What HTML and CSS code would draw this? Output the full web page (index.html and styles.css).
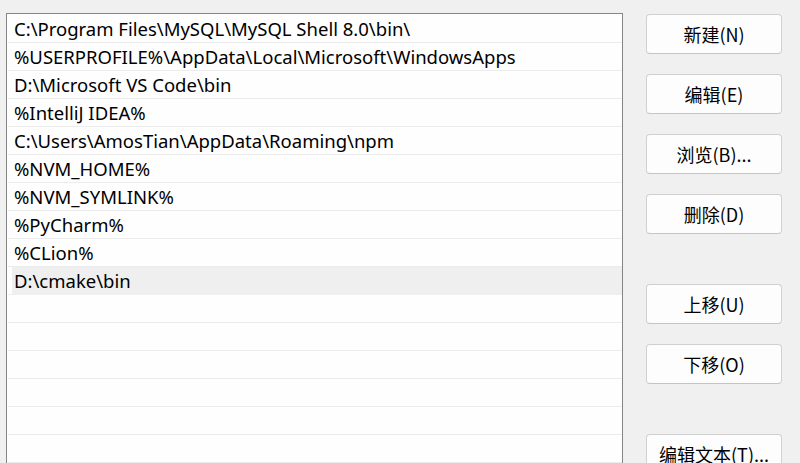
FILE: index.html
```html
<!DOCTYPE html>
<html>
<head>
<meta charset="utf-8">
<link rel="stylesheet" href="styles.css">
</head>
<body>
<div class="dialog">
  <div class="list">
    <div class="row">C:\Program Files\MySQL\MySQL Shell 8.0\bin\</div>
    <div class="row">%USERPROFILE%\AppData\Local\Microsoft\WindowsApps</div>
    <div class="row">D:\Microsoft VS Code\bin</div>
    <div class="row">%IntelliJ IDEA%</div>
    <div class="row">C:\Users\AmosTian\AppData\Roaming\npm</div>
    <div class="row">%NVM_HOME%</div>
    <div class="row">%NVM_SYMLINK%</div>
    <div class="row">%PyCharm%</div>
    <div class="row">%CLion%</div>
    <div class="row selected">D:\cmake\bin</div>
    <div class="row"></div>
    <div class="row"></div>
    <div class="row"></div>
    <div class="row"></div>
    <div class="row"></div>
    <div class="row"></div>
  </div>
  <div class="buttons">
    <button class="btn">新建(N)</button>
    <button class="btn">编辑(E)</button>
    <button class="btn">浏览(B)...</button>
    <button class="btn">删除(D)</button>
    <button class="btn spaced">上移(U)</button>
    <button class="btn">下移(O)</button>
    <button class="btn spaced">编辑文本(T)...</button>
  </div>
</div>
</body>
</html>
```
FILE: styles.css
```css
html, body {
  margin: 0;
  padding: 0;
  height: 100%;
  overflow: hidden;
  background: #f0f0f0;
}
.dialog {
  display: flex;
  align-items: flex-start;
  font-family: "Noto Sans", "Noto Sans CJK SC", sans-serif;
}
.list {
  margin-left: 6px;
  margin-top: 13px;
  width: 614px;
  height: 480px;
  border: 1px solid #858585;
  background: #fefefe;
  padding-top: 1px;
  padding-left: 1px;
  box-sizing: content-box;
}
.row {
  height: 27px;
  border-bottom: 1px solid #ececec;
  padding-left: 6px;
  font-size: 18.5px;
  line-height: 27px;
  color: #000;
  white-space: nowrap;
}
.row.selected {
  background: linear-gradient(to right, transparent 4px, #efefef 4px);
  border-bottom-color: #efefef;
}
.buttons {
  display: flex;
  flex-direction: column;
  gap: 20px;
  margin-left: 23px;
  margin-top: 14px;
}
.btn {
  width: 136px;
  height: 40px;
  box-sizing: border-box;
  border: 1px solid #d0d0d0;
  border-bottom-color: #c4c4c4;
  border-radius: 4px;
  background: #fdfdfd;
  font-family: "Noto Sans CJK SC", "Noto Sans", sans-serif;
  font-size: 18px;
  line-height: 38px;
  color: #000;
  padding: 0;
  white-space: nowrap;
}
.btn.spaced {
  margin-top: 30px;
}
```
